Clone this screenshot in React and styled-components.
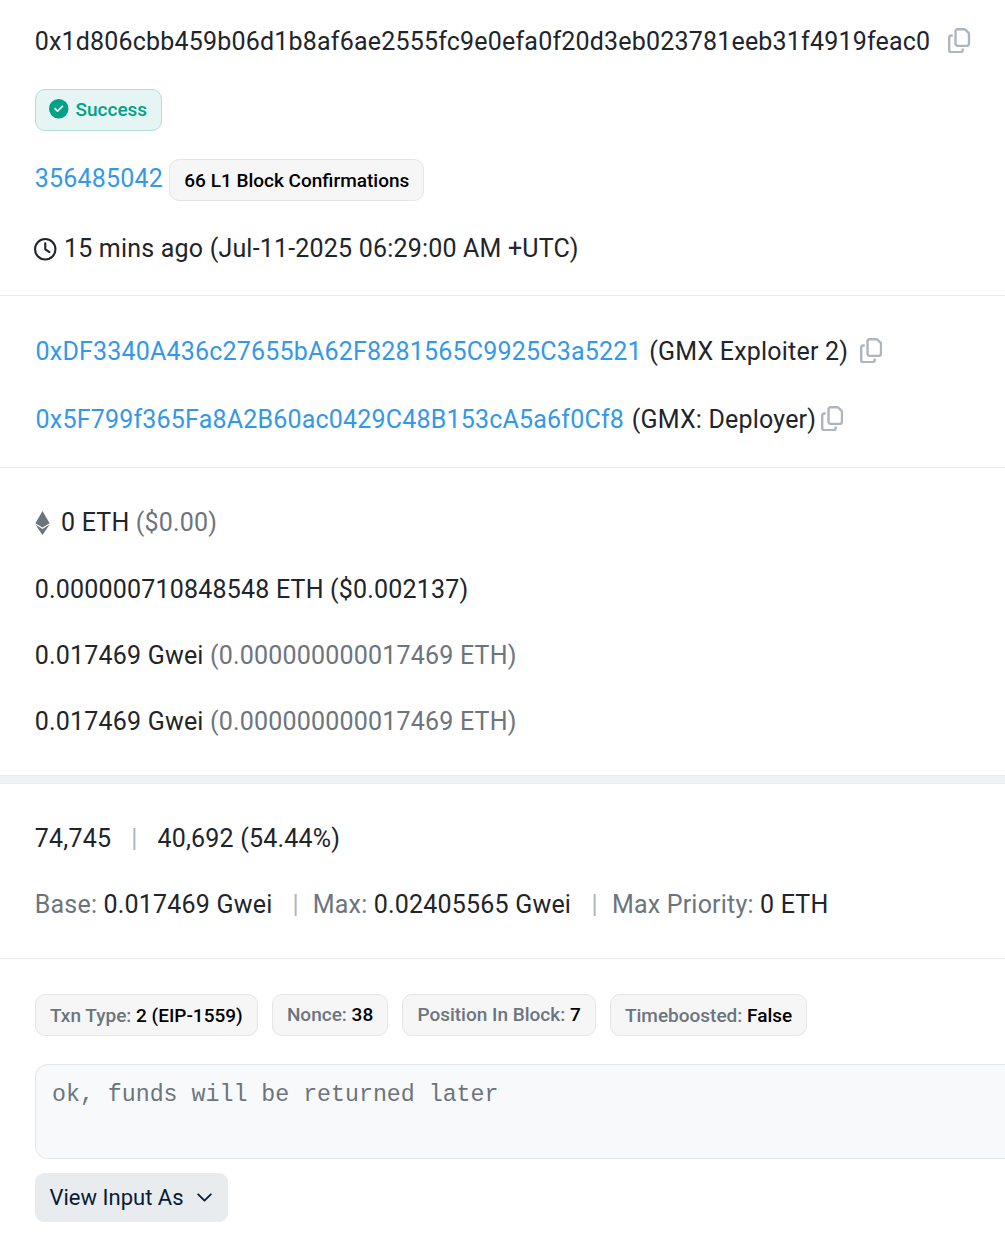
import styled, { createGlobalStyle } from 'styled-components';
import { FaCircleCheck, FaEthereum, FaRegClock, FaRegCopy } from 'react-icons/fa6';

const GlobalStyle = createGlobalStyle`
  body {
    margin: 0;
    background: #fff;
    overflow: hidden;
  }
`;

const Page = styled.main`
  width: 100%;
  min-height: 1249px;
  overflow: hidden;
  color: #212529;
  font-family: Roboto, sans-serif;
  font-size: 25px;
  letter-spacing: 0.195px;
  line-height: 40px;
  white-space: pre;
`;

const Section = styled.section`
  display: flex;
  flex-direction: column;
  box-sizing: border-box;
  height: ${props => props.height}px;
  padding: ${props => props.top}px 0 0 ${props => props.left || 35}px;
  border-bottom: 1px solid ${props => props.last ? 'transparent' : '#e9ecef'};
`;

const Band = styled.div`
  height: 7px;
  background: #f1f2f5;
  border-bottom: 1px solid #e9ecef;
`;

const Row = styled.div`
  display: flex;
  align-items: flex-start;
  height: ${props => props.height || 38}px;
  margin-bottom: ${props => props.gap || 0}px;
`;

const Link = styled.a`
  color: #3498e8;
`;

const Muted = styled.span`
  color: #6c757d;
`;

const NameTag = styled.span`
  margin-left: 7.7px;
`;

const Separator = styled.span`
  margin: 0 ${props => props.after}px 0 ${props => props.before}px;
  color: #adb5bd;
`;

const Badge = styled.span`
  display: flex;
  align-items: center;
  box-sizing: border-box;
  height: 42px;
  padding: ${props => props.$low ? 2 : 0}px 14px 0;
  border: 1px solid ${props => props.$success ? '#b2dfd8' : '#e3e5e8'};
  border-radius: 10px;
  background: ${props => props.$success ? '#e5f5f3' : '#f6f6f7'};
  color: ${props => props.$success ? '#00a186' : '#000'};
  font-size: 19px;
  font-weight: 500;
  letter-spacing: 0;

  svg {
    margin: -2px 7px 0 -0.7px;
  }
`;

const BadgeList = styled.div`
  display: flex;
  gap: 14.2px;
  margin-bottom: 28px;
`;

const CopyIcon = styled(FaRegCopy)`
  width: 22.2px;
  height: 25.4px;
  margin: 6px 0 0 ${props => props.$space}px;
  color: #adb5bd;
`;

const ClockIcon = styled(FaRegClock)`
  width: 22.5px;
  height: 22.5px;
  margin: 9px 7.3px 0 -0.5px;
`;

const EthIcon = styled(FaEthereum)`
  width: 15px;
  height: 24px;
  margin: 8px 11.2px 0 0;
  color: #6c757d;
`;

const InputData = styled.div`
  box-sizing: border-box;
  height: 95px;
  padding: 10px 16px;
  border: 1px solid #e3e6ea;
  border-right: 0;
  border-radius: 13px 0 0 13px;
  background: #f8f9fb;
  color: #6c757d;
  font-family: "Liberation Mono", monospace;
  font-size: 23.25px;
  letter-spacing: 0;
`;

const Button = styled.button`
  display: flex;
  align-items: center;
  align-self: flex-start;
  gap: 13.5px;
  height: 49px;
  margin-top: 14px;
  padding: 0 15.5px 0 14.5px;
  border: 0;
  border-radius: 9px;
  background: #e9ecef;
  color: #081d35;
  font: 400 22px Roboto, sans-serif;
  letter-spacing: 0;
`;

const badges = [
  { label: 'Txn Type:', value: '2 (EIP-1559)', low: true },
  { label: 'Nonce:', value: '38' },
  { label: 'Position In Block:', value: '7' },
  { label: 'Timeboosted:', value: 'False', low: true },
];

export default function App() {
  return (
    <Page>
      <GlobalStyle />
      <Section height={296} top={22} left={34.7}>
        <Row gap={29}>
          <span>0x1d806cbb459b06d1b8af6ae2555fc9e0efa0f20d3eb023781eeb31f4919feac0</span>
          <CopyIcon $space={18} />
        </Row>
        <Row height={42} gap={28}>
          <Badge $success>
            <FaCircleCheck size={19.5} />
            Success
          </Badge>
        </Row>
        <Row height={42} gap={28}>
          <Link>356485042</Link>
          <span> </span>
          <Badge $low>66 L1 Block Confirmations</Badge>
        </Row>
        <Row>
          <ClockIcon />
          <span>15 mins ago (Jul-11-2025 06:29:00 AM +UTC)</span>
        </Row>
      </Section>

      <Section height={172} top={36} left={35.6}>
        <Row gap={30}>
          <Link>0xDF3340A436c27655bA62F8281565C9925C3a5221</Link>
          <NameTag>(GMX Exploiter 2)</NameTag>
          <CopyIcon $space={11.5} />
        </Row>
        <Row>
          <Link>0x5F799f365Fa8A2B60ac0429C48B153cA5a6f0Cf8</Link>
          <NameTag>(GMX: Deployer)</NameTag>
          <CopyIcon $space={4.5} />
        </Row>
      </Section>

      <Section height={308} top={35} left={34.8}>
        <Row gap={29}>
          <EthIcon />
          <span>0 ETH <Muted>($0.00)</Muted></span>
        </Row>
        <Row gap={28}>
          <span>0.000000710848548 ETH ($0.002137)</span>
        </Row>
        <Row gap={28}>
          <span>0.017469 Gwei <Muted>(0.000000000017469 ETH)</Muted></span>
        </Row>
        <Row>
          <span>0.017469 Gwei <Muted>(0.000000000017469 ETH)</Muted></span>
        </Row>
      </Section>
      <Band />

      <Section height={175} top={35} left={34.8}>
        <Row gap={28}>
          <span>74,745</span>
          <Separator before={20} after={20}>|</Separator>
          <span>40,692 (54.44%)</span>
        </Row>
        <Row>
          <span><Muted>Base:</Muted> 0.017469 Gwei</span>
          <Separator before={20} after={14}>|</Separator>
          <span><Muted>Max:</Muted> 0.02405565 Gwei</span>
          <Separator before={20.5} after={14}>|</Separator>
          <span><Muted>Max Priority:</Muted> 0 ETH</span>
        </Row>
      </Section>

      <Section height={290} top={35} last>
        <BadgeList>
          {badges.map(badge => (
            <Badge key={badge.label} $low={badge.low}>
              <span><Muted>{badge.label}</Muted> {badge.value}</span>
            </Badge>
          ))}
        </BadgeList>
        <InputData>ok, funds will be returned later</InputData>
        <Button>
          View Input As
          <svg width="15" height="10" viewBox="0 0 15 10" fill="none" stroke="currentColor" strokeWidth="1.8" strokeLinecap="round" strokeLinejoin="round">
            <path d="M1.2 1.3l6.3 6.3 6.3-6.3" />
          </svg>
        </Button>
      </Section>
    </Page>
  );
}
